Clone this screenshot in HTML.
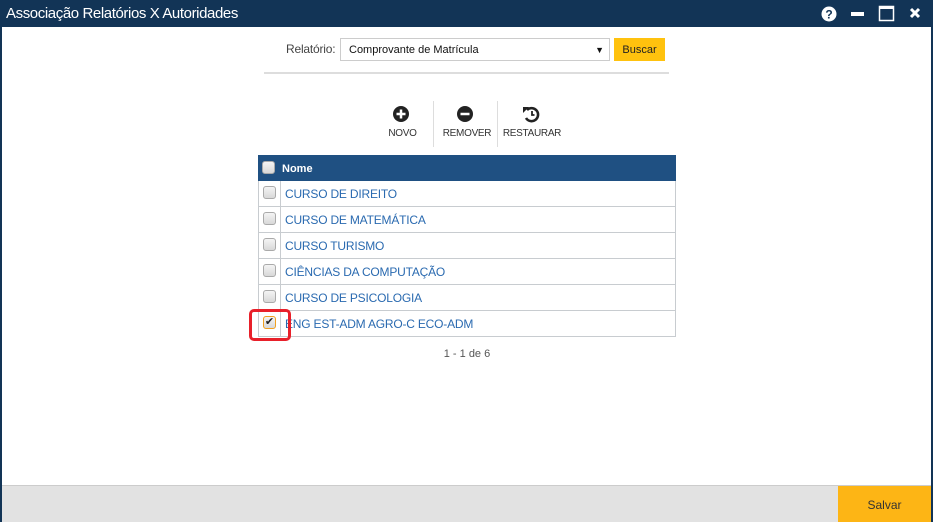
<!DOCTYPE html>
<html><head><meta charset="utf-8"><style>
*{margin:0;padding:0;box-sizing:border-box}
body{width:933px;height:522px;position:relative;overflow:hidden;background:#fff;font-family:"Liberation Sans",sans-serif}
.abs{position:absolute}
.title{left:0;top:0;width:933px;height:27px;background:#123456;color:#fff;font-size:15px;line-height:27px;padding-left:6px;letter-spacing:-0.4px}
.bl{top:27px;left:0;width:2px;height:495px;background:#123456}
.br{top:27px;right:0;width:2px;height:495px;background:#123456}
.cb{width:13px;height:13px;border:1px solid #aaa;border-radius:3px;background:linear-gradient(#f4f4f4,#d8d8d8)}
.row{left:258px;width:418px;height:26px;border:1px solid #c8ccd0;border-top:none}
.row .c{position:absolute;left:0;top:0;width:22px;height:25px;border-right:1px solid #c8ccd0}
.row .c .cb{position:absolute;left:4px;top:5px}
.row .t{position:absolute;left:26px;top:1px;line-height:25px;font-size:12px;color:#2a6ab0;letter-spacing:-0.2px}
.lbl{font-size:10px;color:#333;text-align:center;letter-spacing:-0.3px}
</style></head><body>
<div class="abs title">Associação Relatórios X Autoridades</div>
<svg class="abs" style="left:820px;top:5px" width="110" height="18">
<circle cx="9" cy="9" r="7.5" fill="#fff"/><text x="9" y="13.5" text-anchor="middle" font-size="12" font-weight="bold" fill="#123456" font-family="Liberation Sans">?</text>
<rect x="31" y="7" width="13" height="4" fill="#fff"/>
<rect x="59.5" y="1.5" width="14" height="14" fill="none" stroke="#fff" stroke-width="1.5"/><rect x="59" y="1" width="15" height="3" fill="#fff"/>
<path d="M91 4 L99 12 M99 4 L91 12" stroke="#fff" stroke-width="3"/>
</svg>
<div class="abs bl"></div><div class="abs br"></div>
<div class="abs" style="left:286px;top:42px;font-size:12px;color:#444;letter-spacing:-0.2px">Relatório:</div>
<div class="abs" style="left:340px;top:38px;width:270px;height:23px;border:1px solid #ccc;font-size:11px;line-height:22px;padding-left:8px;color:#111">Comprovante de Matrícula<span style="position:absolute;right:5px;font-size:9px">▼</span></div>
<div class="abs" style="left:614px;top:38px;width:51px;height:23px;background:#ffc20e;font-size:11px;line-height:24px;text-align:center;color:#222">Buscar</div>
<div class="abs" style="left:264px;top:72px;width:405px;height:2px;background:#ddd"></div>
<svg class="abs" style="left:392px;top:105px" width="18" height="18"><circle cx="9" cy="9" r="8" fill="#222"/><path d="M9 4.5V13.5M4.5 9H13.5" stroke="#fff" stroke-width="2.5"/></svg>
<svg class="abs" style="left:456px;top:105px" width="18" height="18"><circle cx="9" cy="9" r="8" fill="#222"/><path d="M4.5 9H13.5" stroke="#fff" stroke-width="2.5"/></svg>
<svg class="abs" style="left:521px;top:104px" width="20" height="20"><path d="M6 6 A6.5 6.5 0 1 1 5 14" stroke="#222" stroke-width="2.6" fill="none"/><path d="M2 3 L8 3 L2 9Z" fill="#222"/><path d="M11 7V11H13.5" stroke="#222" stroke-width="1.8" fill="none"/></svg>
<div class="abs" style="left:433px;top:101px;width:1px;height:46px;background:#ddd"></div>
<div class="abs" style="left:497px;top:101px;width:1px;height:46px;background:#ddd"></div>
<div class="abs lbl" style="left:380px;top:128px;width:45px">NOVO</div>
<div class="abs lbl" style="left:440px;top:128px;width:54px">REMOVER</div>
<div class="abs lbl" style="left:502px;top:128px;width:60px">RESTAURAR</div>
<div class="abs" style="left:258px;top:155px;width:418px;height:26px;background:#1f5082"><div class="cb" style="position:absolute;left:4px;top:6px"></div><div style="position:absolute;left:24px;top:1px;line-height:26px;font-size:11px;font-weight:bold;color:#fff">Nome</div></div>
<div class="abs row" style="top:181px"><div class="c"><div class="cb"></div></div><div class="t">CURSO DE DIREITO</div></div>
<div class="abs row" style="top:207px"><div class="c"><div class="cb"></div></div><div class="t">CURSO DE MATEMÁTICA</div></div>
<div class="abs row" style="top:233px"><div class="c"><div class="cb"></div></div><div class="t">CURSO TURISMO</div></div>
<div class="abs row" style="top:259px"><div class="c"><div class="cb"></div></div><div class="t">CIÊNCIAS DA COMPUTAÇÃO</div></div>
<div class="abs row" style="top:285px"><div class="c"><div class="cb"></div></div><div class="t">CURSO DE PSICOLOGIA</div></div>
<div class="abs row" style="top:311px"><div class="c"><div class="cb" style="border-color:#f0a020;font-size:11px;line-height:11px;text-align:center;color:#222">✔</div></div><div class="t">ENG EST-ADM AGRO-C ECO-ADM</div></div>
<div class="abs" style="left:249px;top:309px;width:42px;height:32px;border:3px solid #e8202a;border-radius:5px"></div>
<div class="abs" style="left:430px;top:348px;width:74px;text-align:center;font-size:11px;color:#555">1 - 1 de 6</div>
<div class="abs" style="left:2px;top:485px;width:929px;height:37px;background:#e2e2e2;border-top:1px solid #ccc"></div>
<div class="abs" style="left:838px;top:486px;width:93px;height:36px;background:#fdb515;font-size:12px;line-height:38px;text-align:center;color:#333">Salvar</div>
</body></html>
